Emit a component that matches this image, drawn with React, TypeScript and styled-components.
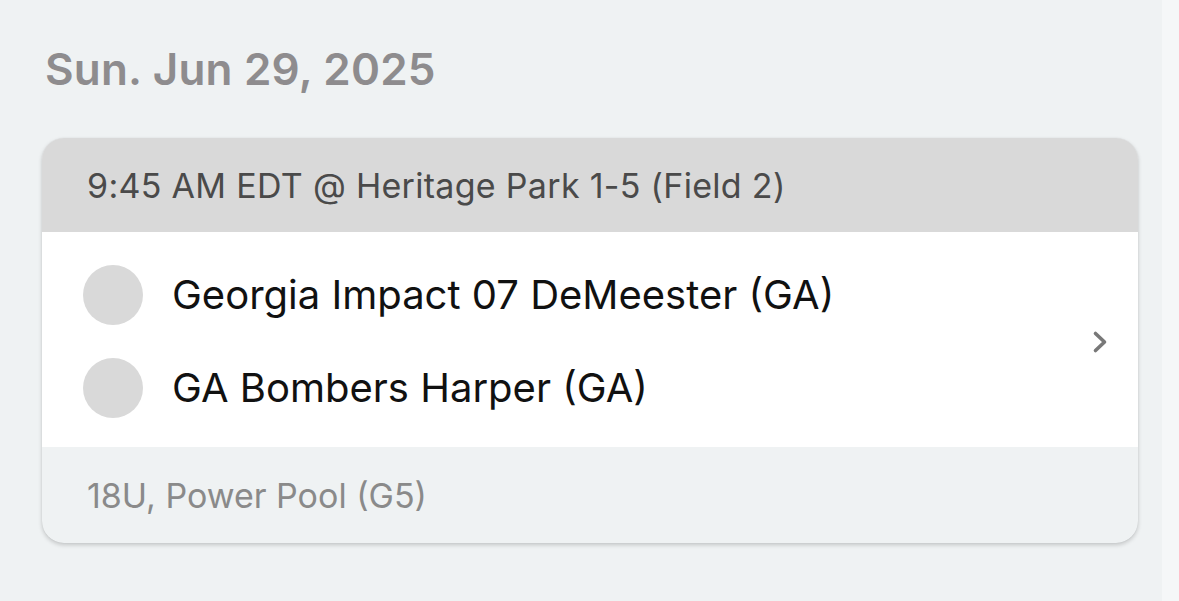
import React from "react";
import styled, { createGlobalStyle } from "styled-components";

interface Team {
  name: string;
}

const teams: Team[] = [
  { name: "Georgia Impact 07 DeMeester (GA)" },
  { name: "GA Bombers Harper (GA)" },
];

const GlobalStyle = createGlobalStyle`
  html, body {
    margin: 0;
    padding: 0;
    background: #eff2f3;
    font-family: Inter, "Noto Sans", sans-serif;
  }
`;

const App = () => {
  return (
    <>
      <GlobalStyle />
      <Page>
        <Main>
          <DateTitle>Sun. Jun 29, 2025</DateTitle>
          <GameCard>
            <CardHeader>9:45 AM EDT @ Heritage Park 1-5 (Field 2)</CardHeader>
            <CardBody>
              <TeamList>
                {teams.map((team) => (
                  <TeamRow key={team.name}>
                    <TeamLogo />
                    <TeamName>{team.name}</TeamName>
                  </TeamRow>
                ))}
              </TeamList>
              <Chevron viewBox="0 0 16 24" aria-hidden>
                <path d="M3.5 3.5 L12.5 12 L3.5 20.5" />
              </Chevron>
            </CardBody>
            <CardFooter>18U, Power Pool (G5)</CardFooter>
          </GameCard>
        </Main>
        <SideStrip />
      </Page>
    </>
  );
};

const Page = styled.div`
  display: flex;
  height: 601px;
  overflow: hidden;
`;

const Main = styled.main`
  flex: 1;
  padding: 42px 24px 0 42px;
`;

const SideStrip = styled.div`
  width: 17px;
  background: #f5f7f8;
`;

const DateTitle = styled.h2`
  margin: 0 0 42px 3px;
  font-size: 44px;
  line-height: 54px;
  font-weight: 600;
  color: #8e8c8e;
  letter-spacing: 0.2px;
`;

const GameCard = styled.section`
  border-radius: 22px;
  overflow: hidden;
  background: #eff2f3;
  box-shadow: 0 2px 4px rgba(0, 0, 0, 0.18), 0 0 1px rgba(0, 0, 0, 0.12);
`;

const CardHeader = styled.div`
  height: 94px;
  display: flex;
  align-items: center;
  padding-left: 45px;
  background: #d9d9d9;
  color: #4a4a4a;
  font-size: 34px;
  letter-spacing: 0.3px;
`;

const CardBody = styled.div`
  height: 215px;
  box-sizing: border-box;
  display: flex;
  align-items: center;
  justify-content: space-between;
  padding: 4px 30px 0 41px;
  background: #fff;
`;

const TeamList = styled.div`
  display: flex;
  flex-direction: column;
  gap: 33px;
`;

const TeamRow = styled.div`
  display: flex;
  align-items: center;
  gap: 29px;
`;

const TeamLogo = styled.div`
  width: 60px;
  height: 60px;
  border-radius: 50%;
  background: #d9d9d9;
`;

const TeamName = styled.span`
  font-size: 40px;
  line-height: 60px;
  color: #111;
`;

const Chevron = styled.svg`
  width: 16px;
  height: 24px;
  fill: none;
  stroke: #787878;
  stroke-width: 3.6;
  stroke-linecap: round;
  stroke-linejoin: round;
`;

const CardFooter = styled.div`
  height: 96px;
  display: flex;
  align-items: center;
  padding-left: 45px;
  color: #8a8a8a;
  font-size: 34px;
`;

export default App;
